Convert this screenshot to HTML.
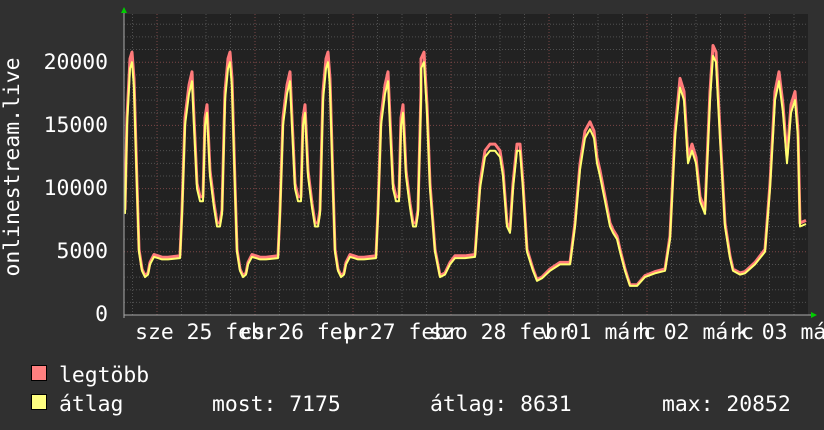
<!DOCTYPE html>
<html><head><meta charset="utf-8"><style>
html,body{margin:0;padding:0;background:#303030;}
svg{display:block}
text{font-family:"DejaVu Sans Mono","Liberation Mono",monospace;font-size:21.4px;fill:#fff}
</style></head><body>
<svg id="s" width="824" height="430" viewBox="0 0 824 430" xmlns="http://www.w3.org/2000/svg">
<rect width="824" height="430" fill="#303030"/>
<rect x="124" y="14" width="684" height="301" fill="#222"/>
<g id="grid"></g>
<polyline id="mx" fill="none" stroke="#ff7a7a" stroke-width="3" stroke-linejoin="round"/>
<polyline id="av" fill="none" stroke="#ffff70" stroke-width="2" stroke-linejoin="round"/>
<line x1="124" y1="315" x2="812" y2="315" stroke="#aaa" stroke-width="1"/>
<line x1="124" y1="12" x2="124" y2="318" stroke="#aaa" stroke-width="1"/>
<polygon points="121,13 127,13 124,7" fill="#0c0"/>
<polygon points="811,312 811,318 817,315" fill="#0c0"/>
<g text-anchor="end">
<text x="108" y="321">0</text>
<text x="108" y="258">5000</text>
<text x="108" y="195">10000</text>
<text x="108" y="132">15000</text>
<text x="108" y="69">20000</text>
</g>
<text transform="translate(19,167) rotate(-90)" text-anchor="middle">onlinestream.live</text>
<g text-anchor="middle">
<text x="206" y="339">sze 25 febr</text>
<text x="304" y="339">cs 26 febr</text>
<text x="402" y="339">p 27 febr</text>
<text x="500" y="339">szo 28 febr</text>
<text x="598" y="339">v 01 márc</text>
<text x="696" y="339">h 02 márc</text>
<text x="794" y="339">k 03 márc</text>
</g>
<rect x="31.5" y="365.5" width="15" height="15" fill="#ff8080" stroke="#000"/>
<rect x="31.5" y="394.5" width="15" height="15" fill="#ffff80" stroke="#000"/>
<text x="59" y="382">legtöbb</text>
<text x="59" y="411">átlag</text>
<text x="212" y="411">most: 7175</text>
<text x="430" y="411">átlag: 8631</text>
<text x="662" y="411">max: 20852</text>
</svg>
<script>
var g=document.getElementById('grid'),h='';
function Y(v){return 315-v*0.01264;}
for(var v=1000;v<=23000;v+=1000){var y=Y(v);var maj=v%5000==0;
h+='<line x1="124" x2="808" y1="'+y+'" y2="'+y+'" stroke="'+(maj?'#7a4646':'#505050')+'" stroke-dasharray="1,2"/>';}
for(var x=157-98;x<808;x+=24.5){if(x<125)continue;var maj=Math.abs(((x-157)%98+98)%98)<1;
h+='<line y1="14" y2="315" x1="'+x+'" x2="'+x+'" stroke="'+(maj?'#7a4646':'#505050')+'" stroke-dasharray="1,2"/>';}
g.innerHTML=h;
var T=[[0,19500],[2,20000],[4,18000],[7,10000],[9,5000],[12,3500],[15,3000],[18,3200],[20,4000],[24,4600],[28,4500],[32,4400],[38,4400],[50,4500],[52,8000],[55,15000],[59,17500],[62,18500],[64,15000],[67,10000],[70,9000],[73,9000],[75,15000],[77,16000],[80,11000],[84,8500],[87,7000],[90,7000],[92,8000],[95,17000]];
var P=[[125,8000],[127,15000]];
[130,228,326].forEach(function(b){T.forEach(function(t){P.push([b+t[0],t[1]]);});});
var R=[[421,19500],[424,20000],[427,16000],[430,10000],[435,5000],[440,3000],[445,3200],[450,4000],[455,4500],[465,4500],[475,4600],[480,10000],[485,12500],[490,13000],[495,13000],[500,12500],[503,11000],[507,7000],[510,6500],[513,10000],[517,13000],[520,13000],[523,10000],[527,5000],[533,3500],[537,2700],[542,2900],[550,3500],[560,4000],[570,4000],[575,7000],[580,11500],[585,14000],[590,14700],[594,14000],[597,12000],[600,11000],[605,9000],[610,7000],[613,6500],[617,6000],[620,5000],[625,3500],[630,2300],[637,2300],[645,3000],[655,3300],[665,3500],[670,6000],[675,14000],[680,18000],[684,17000],[688,12000],[692,13000],[696,12000],[700,9000],[705,8000],[710,17000],[713,20500],[716,20000],[720,14000],[725,7000],[730,4500],[733,3500],[740,3200],[745,3300],[755,4000],[765,5000],[770,10000],[775,17000],[779,18500],[783,16000],[787,12000],[791,16000],[795,17000],[798,14000],[800,7000],[806,7200]];
P=P.concat(R);
function pts(k,o){return P.map(function(p){return p[0]+','+(Y(p[1]*k)-o).toFixed(1);}).join(' ');}
document.getElementById('mx').setAttribute('points',pts(1.04,0));
document.getElementById('av').setAttribute('points',pts(1,0));
</script>
</body></html>
